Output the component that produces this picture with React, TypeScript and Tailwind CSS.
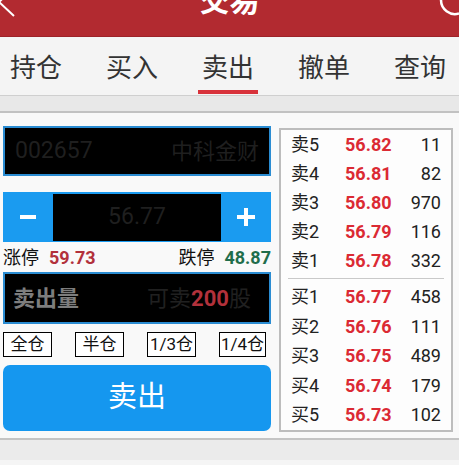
import React from "react";

const font = { fontFamily: "Roboto, 'Noto Sans CJK SC', sans-serif" };

const sells = [
  { label: "卖5", price: "56.82", qty: "11" },
  { label: "卖4", price: "56.81", qty: "82" },
  { label: "卖3", price: "56.80", qty: "970" },
  { label: "卖2", price: "56.79", qty: "116" },
  { label: "卖1", price: "56.78", qty: "332" }
];

const buys = [
  { label: "买1", price: "56.77", qty: "458" },
  { label: "买2", price: "56.76", qty: "111" },
  { label: "买3", price: "56.75", qty: "489" },
  { label: "买4", price: "56.74", qty: "179" },
  { label: "买5", price: "56.73", qty: "102" }
];

const tabs = ["持仓", "买入", "卖出", "撤单", "查询"];

const QuoteRow = ({ label, price, qty, h }: { label: string; price: string; qty: string; h: string }) => (
  <div className={`flex items-center pl-[10px] pr-[10px] text-[18px] ${h}`}>
    <span className="w-[54px] text-[#222]">{label}</span>
    <span className="font-bold text-[#db2a33]">{price}</span>
    <span className="flex-1 text-right text-[#222]">{qty}</span>
  </div>
);

const App = () => {
  return (
    <div className="w-[459px] h-[465px] overflow-hidden bg-[#f5f5f5]" style={font}>
      {/* header */}
      <div className="h-[37px] bg-[#b22a30] border-b border-[#9d2329] flex justify-between items-start overflow-hidden">
        <svg width="20" height="20" viewBox="0 0 20 20" className="shrink-0">
          <polyline points="14,-12 -1,2 14,16" fill="none" stroke="#fff" strokeWidth="2" />
        </svg>
        <div className="-mt-[14px] text-[30px] leading-[30px] font-bold text-white">交易</div>
        <svg width="20" height="20" viewBox="0 0 20 20" className="shrink-0">
          <path d="M2 0 A14 14 0 0 0 20 13.5" fill="none" stroke="#fff" strokeWidth="2.5" />
        </svg>
      </div>

      {/* tabs */}
      <div className="h-[59px] bg-[#f4f4f4] border-b border-[#cfcfcf] flex pl-[10px] gap-[44px]">
        {tabs.map((t) => (
          <div key={t} className="flex flex-col items-center pt-[17px] w-[52px]">
            <span className="text-[26px] leading-[28px] text-[#333] whitespace-nowrap">{t}</span>
            {t === "卖出" && <div className="mt-[8px] h-[4px] w-[60px] bg-[#d8323b]" />}
          </div>
        ))}
      </div>
      <div className="h-[17px] bg-[#e8e8e8] border-b-2 border-[#c2c2c2]" />

      {/* content */}
      <div className="bg-[#f9f9f9] flex pl-[3px] pt-[13px] pb-[6px] border-b-2 border-[#c4c4c4]">
        <div className="w-[268px] flex flex-col">
          <div className="h-[50px] bg-black border-2 border-[#2a8cd2] flex items-center justify-between pl-[10px] pr-[10px] text-[23px] text-[#1f1f1f]">
            <span>002657</span>
            <span className="text-[22px]">中科金财</span>
          </div>

          <div className="mt-[16px] h-[50px] bg-[#1a9bf0] flex items-center">
            <div className="w-[50px] flex justify-center">
              <svg width="18" height="18" viewBox="0 0 18 18">
                <rect x="1" y="7" width="16" height="4" fill="#fff" />
              </svg>
            </div>
            <div className="w-[168px] h-[47px] bg-black flex items-center justify-center text-[23px] text-[#1f1f1f]">
              56.77
            </div>
            <div className="flex-1 flex justify-center">
              <svg width="20" height="20" viewBox="0 0 20 20">
                <rect x="1" y="8" width="18" height="4" fill="#fff" />
                <rect x="8" y="1" width="4" height="18" fill="#fff" />
              </svg>
            </div>
          </div>

          <div className="h-[30px] flex items-center justify-between text-[18px]">
            <div className="flex items-center">
              <span className="text-[#111]">涨停</span>
              <span className="ml-[10px] font-bold text-[#b2313b]">59.73</span>
            </div>
            <div className="flex items-center">
              <span className="text-[#111]">跌停</span>
              <span className="ml-[10px] font-bold text-[#1f6d4b]">48.87</span>
            </div>
          </div>

          <div className="h-[52px] bg-black border-2 border-[#2a8cd2] flex items-center justify-between pl-[8px] pr-[18px] text-[22px]">
            <span className="font-bold text-[#7d7d7d]">卖出量</span>
            <span className="text-[#202020]">
              可卖<span className="font-bold text-[#b2313b]">200</span>股
            </span>
          </div>

          <div className="mt-[8px] flex gap-[23px] text-[17px] text-[#111]">
            {["全仓", "半仓", "1/3仓", "1/4仓"].map((b, i) => (
              <div
                key={b}
                className={`h-[25px] border border-black bg-white flex items-center justify-center whitespace-nowrap ${i === 3 ? "w-[47px]" : "w-[49px]"}`}
              >
                {b}
              </div>
            ))}
          </div>

          <div className="mt-[8px] h-[66px] rounded-[7px] bg-[#1597ef] flex items-center justify-center text-[29px] text-white">
            卖出
          </div>
        </div>

        <div className="ml-[8px] mt-[2px] w-[174px] border-2 border-[#bdbdbd] bg-[#fdfdfd] flex flex-col">
          {sells.map((r) => (
            <QuoteRow key={r.label} {...r} h="h-[29px]" />
          ))}
          <div className="h-[7px] flex items-center px-[7px]">
            <div className="h-px w-full bg-[#c9c9c9]" />
          </div>
          {buys.map((r) => (
            <QuoteRow key={r.label} {...r} h="h-[29.5px]" />
          ))}
        </div>
      </div>
      <div className="h-[20px] bg-[#ebebeb]" />
    </div>
  );
};

export default App;
